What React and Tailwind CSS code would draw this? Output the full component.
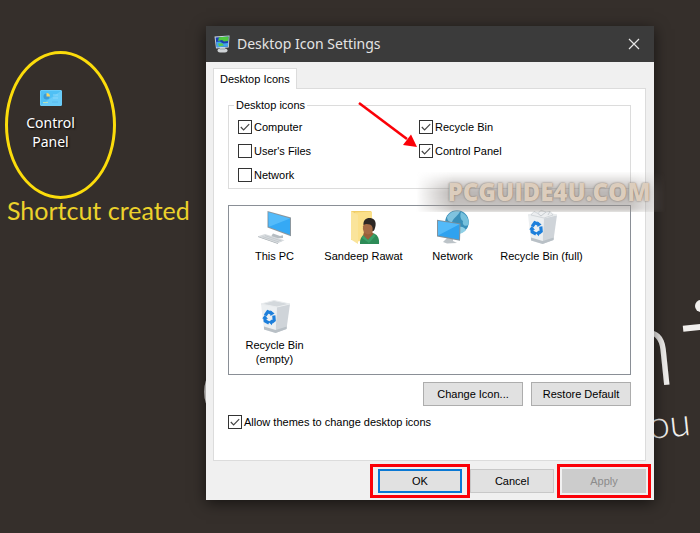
import React from 'react';

const uiFont = "font-['Liberation_Sans',Arial,sans-serif]";
const segoeFont = "font-['Noto_Sans','Open_Sans',sans-serif]";

const ControlPanelIcon = () => (
  <svg className="w-[22px] h-4" viewBox="0 0 22 16">
    <rect x="0.5" y="0.5" width="21" height="15" rx="0.5" fill="#4fc0f5" stroke="#6accf9" />
    <path d="M1 15 L21 15 L21 1 Z" fill="#7ad2fa" opacity="0.6" />
    <circle cx="6.5" cy="6.5" r="3" fill="#3a9bd8" />
    <path d="M6.5 6.5 V3 A3.5 3.5 0 0 1 10 6.5 Z" fill="#f6d56a" />
    <path d="M13 5 h5 M13 8 h5" stroke="#8ad6fb" strokeWidth="1" />
    <path d="M3 12.5 h5" stroke="#b9e0b8" strokeWidth="1" />
    <path d="M12 12 h6" stroke="#5bb8ec" strokeWidth="1" />
  </svg>
);

const TitleIcon = () => (
  <svg className="w-4 h-[18px]" viewBox="0 0 16 18">
    <ellipse cx="8.5" cy="15.4" rx="5" ry="2.2" fill="#cfd3d6" />
    <path d="M6 12 h5 v3 h-5z" fill="#b4babe" />
    <path d="M0.5 1.5 L15.5 0.5 L14.8 12.5 L2 13.5 Z" fill="#c9d4de" />
    <path d="M1.6 2.4 L14.6 1.5 L14 11.4 L2.8 12.3 Z" fill="#1b3fb4" />
    <path d="M5 2.2 L14.6 1.5 L14.2 6 L10 6.5 L8 5 L4 6 Z" fill="#4fc740" />
    <path d="M2.2 7 L6 6.6 L9 8.5 L14.1 8 L14 11.4 L2.8 12.3 Z" fill="#43a6e8" />
    <path d="M4 8.6 L8 8.3 L10 10.6 L5 11.2 Z" fill="#58cb4b" />
  </svg>
);

const PcIcon = () => (
  <svg className="w-9 h-9" viewBox="0 0 36 36">
    <path d="M16 24.5 L23 27 L26 26.3 L26 29 L20 29.6 L14 27.6 Z" fill="#b6bdc2" />
    <path d="M10.5 2 L34 8.6 L34 27.2 L10.5 18.6 Z" fill="#8c979e" />
    <path d="M11.4 3.2 L33 9.4 L33 25.7 L11.4 17.8 Z" fill="#35a9f5" />
    <path d="M11.4 3.2 L33 9.4 L12 17.8 Z" fill="#62c3fc" opacity="0.7" />
    <path d="M1 27.2 L8 25 L27.5 31.2 L21 34.2 Z" fill="#d8dcdf" />
    <path d="M1 27.2 L21 34.2 L21 35 L1 28.1 Z" fill="#a5acb1" />
    <path d="M5.5 27.6 L22 33 M8 26.6 L24.5 32" stroke="#b7bec3" strokeWidth="0.6" />
  </svg>
);

const UserFolderIcon = () => (
  <svg className="w-9 h-9" viewBox="0 0 36 36">
    <path d="M5 2 L25 2 L25 29 L5 31 Z" fill="#f0cd67" />
    <path d="M9 3.5 L26 2.5 L26 30 L9 33 Z" fill="#fbe08a" />
    <path d="M5 2 L12 6 L12 35 L5 30.5 Z" fill="#fae49b" />
    <path d="M14 35 C13.500 30 16 26 20 25 L28 24.500 C32 26 33.500 30 33 35 Z" fill="#2d8b57" />
    <path d="M18 23 L25 22 L28 25 L22 31 L17 26.500 Z" fill="#98603a" />
    <path d="M17 26 L22 31 L28 24.500 L29.500 27 L23 34 L16 29 Z" fill="#3ba068" />
    <ellipse cx="22.5" cy="18.5" rx="5.6" ry="6.8" fill="#a56b45" transform="rotate(12 22.5 18.5)" />
    <path d="M17.500 16 C17 11 20.500 8.500 24.500 9 C29.500 9.500 31 14.500 28.500 20.500 C27.800 22 27 22.500 26.500 21.500 C27 19 26.500 16.500 24 15.500 C21.500 14.800 19.500 14.500 17.500 16 Z" fill="#2d2724" />
  </svg>
);

const NetworkIcon = () => (
  <svg className="w-9 h-9" viewBox="0 0 36 36">
    <circle cx="22" cy="13" r="11.8" fill="#398fb9" />
    <path d="M12 8 C15 3 20 1 25 2 C24 6 19 8 17 13 C14 13 12 11 12 8 Z" fill="#7fc3df" />
    <path d="M26 3 C32 6 34.5 11 33.5 16 C30 18 27 16 28 12 C25 10 25 6 26 3 Z" fill="#76c1dd" />
    <path d="M24 18 C27 17 30 19 31 21 C28 24 26 25 23 24.6 Z" fill="#8fd0e6" />
    <path d="M12 29 L18 30 L18 32 L22 34 L12 34.5 L8 33 Z" fill="#bcc3c8" />
    <path d="M2 10.8 L25.5 14.5 L25 31.8 L2 27.4 Z" fill="#83929c" />
    <path d="M3 12 L24.5 15.3 L24 30.4 L3 26.4 Z" fill="#2fa2ef" />
    <path d="M3 12 L24.5 15.3 L3 26.4 Z" fill="#60c2fc" opacity="0.75" />
  </svg>
);

const BinIcon = ({ full }) => (
  <svg className="w-9 h-9" viewBox="0 0 36 36">
    <path d="M4 6 L20 9 L18.500 35 L7 31.500 Z" fill="#eceff1" />
    <path d="M20 9 L33 6 L29.500 31 L18.500 35 Z" fill="#cfd4d9" />
    <path d="M4 6 L17 2.5 L33 6 L20 9 Z" fill={full ? '#e6e9eb' : '#d3d8dc'} stroke="#e9ecee" strokeWidth="1" />
    {full && (
      <>
        <path d="M7 6 L10 2.5 L14 4.5 L17 1.2 L22 3 L26 2.4 L29 6 L20 9 Z" fill="#eceef0" stroke="#c9ced3" strokeWidth="0.7" />
        <path d="M14 4.5 L17 7 L22 3 M24 6 L26 2.4" stroke="#bcc3c8" strokeWidth="0.8" fill="none" />
      </>
    )}
    <path d="M7 28.500 L18.700 32 L29.800 28.500 L29.500 31 L18.500 35 L7 31.500 Z" fill="#b9c0c6" />
    <g fill="none" stroke="#1d7fdb" strokeWidth="3.2">
      <path d="M8.2 17.500 L10.800 13.800 L14.5 15.2" />
      <path d="M16.8 17.5 L17.2 22.3 L14.5 24.5" />
      <path d="M12 25 L8.2 23 L7.8 19.6" />
    </g>
    <path d="M13.4 12.2 L17.6 15.4 L13.4 18 Z M15 21.4 L15 27.200 L11.4 24 Z M5.2 20.6 L7.800 17 L11 21 Z" fill="#1d7fdb" />
  </svg>
);

const CheckBox = ({ id, label, checked }) => (
  <div className="flex items-center gap-[2px] h-6">
    <span className="grid place-items-center">
      <input
        id={id}
        type="checkbox"
        defaultChecked={checked}
        className="peer col-start-1 row-start-1 appearance-none w-[14px] h-[14px] border border-[#333333] bg-white"
      />
      <svg
        className="col-start-1 row-start-1 w-[10px] h-[10px] pointer-events-none invisible peer-checked:visible"
        viewBox="0 0 10 10"
        fill="none"
        stroke="#444444"
        strokeWidth="1.2"
      >
        <path d="M0.8 5 L3.6 7.8 L9.2 2.2" />
      </svg>
    </span>
    <label htmlFor={id}>{label}</label>
  </div>
);

const desktopIcons = [
  { label: 'This PC', icon: <PcIcon /> },
  { label: 'Sandeep Rawat', icon: <UserFolderIcon /> },
  { label: 'Network', icon: <NetworkIcon /> },
  { label: 'Recycle Bin (full)', icon: <BinIcon full /> },
  { label: 'Recycle Bin (empty)', icon: <BinIcon />, wrap: true },
];

const Wallpaper = () => (
  <div className="absolute inset-0 overflow-hidden text-[#f1efed] font-['Lato',sans-serif]" aria-hidden="true">
    <span className="absolute left-[199px] top-[328px] text-[100px] leading-[100px] font-light">c</span>
    <span className="absolute left-[612px] top-[288px] text-[112px] leading-[112px] font-light -rotate-6">n</span>
    <span className="absolute left-[683px] top-[324px] w-8 h-[6px] bg-current -rotate-6" />
    <span className="absolute left-[695px] top-[300px] w-3 h-3 rounded-full bg-current" />
    <span className="absolute left-[648px] top-[398px] text-[38px] leading-[48px] font-light -rotate-6">ou</span>
  </div>
);

const Watermark = () => (
  <div className="absolute left-[210px] right-[-12px] top-[146px] h-10 flex items-center justify-center pointer-events-none">
    <div className="absolute inset-0 bg-linear-to-b from-transparent via-[#8b8480]/60 to-[#9a9490]/50 mask-x-from-85% blur-[2px]" />
    <span className="relative pl-4 font-['Open_Sans',sans-serif] font-extrabold text-[24px] leading-6 text-[#dccdbd] [text-shadow:0_0_2px_#7d6b5c]">
      PCGUIDE4U.COM
    </span>
  </div>
);

const DesktopShortcut = () => (
  <div className="relative w-[206px] shrink-0 pl-[5px] pt-[51px]">
    <div className="w-[111px] h-[148px] border-3 border-[#fbdc0b] rounded-[50%] pt-9 pr-5 flex justify-center items-start">
      <button className={`${segoeFont} flex flex-col items-center gap-[7px] w-16 text-[14px] leading-[19px] text-white [text-shadow:1px_1px_2px_#000]`}>
        <ControlPanelIcon />
        Control Panel
      </button>
    </div>
    <p className="pl-[2px] font-['Lato',sans-serif] text-[25px] leading-[22px] text-[#ecd22b] whitespace-nowrap">
      Shortcut created
    </p>
  </div>
);

const DialogButton = ({ children, className, ...props }) => (
  <button className={`bg-[#e1e1e1] text-center ${className}`} {...props}>
    {children}
  </button>
);

const SettingsDialog = () => (
  <section
    aria-label="Desktop Icon Settings"
    className={`relative flex-1 min-w-[448px] mt-[26px] mr-[46px] self-start bg-[#f0f0f0] text-black text-[11px] leading-[14px] shadow-[0_3px_14px_rgba(0,0,0,0.6)] ${uiFont}`}
  >
    <header className="flex items-center gap-[7px] h-9 pl-2 pr-3 bg-[#3b3b3b]">
      <TitleIcon />
      <h1 className={`flex-1 text-[14px] leading-5 text-[#e4e4e4] ${segoeFont}`}>Desktop Icon Settings</h1>
      <button aria-label="Close" className="p-[2px]">
        <svg className="w-3 h-3" viewBox="0 0 12 12" stroke="#e6e6e6" strokeWidth="1.2">
          <path d="M1 1 L11 11 M11 1 L1 11" />
        </svg>
      </button>
    </header>

    <div className="pl-[7px] pr-2 pt-[6px]">
      <div role="tablist" className="flex">
        <button role="tab" aria-selected="true" className="relative z-10 -mb-px h-[21px] px-[6px] bg-white border border-b-0 border-[#dcdcdc]">
          Desktop Icons
        </button>
      </div>

      <div role="tabpanel" className="bg-white border border-[#dcdcdc] px-[14px] pt-2 pb-[26px]">
        <fieldset className="relative border border-[#dcdcdc] pl-[9px] pb-px">
          <legend className="-ml-1 px-[2px] leading-4">Desktop icons</legend>
          <div className="grid grid-cols-[181px_1fr] pt-[2px]">
            <CheckBox id="computer" label="Computer" checked />
            <CheckBox id="recycle" label="Recycle Bin" checked />
            <CheckBox id="files" label="User's Files" />
            <CheckBox id="control" label="Control Panel" checked />
            <CheckBox id="network" label="Network" />
          </div>
          <svg className="absolute left-[128px] -top-3 w-[62px] h-[48px] pointer-events-none" viewBox="0 0 62 48">
            <path d="M2 2 L50 38" stroke="#fb0007" strokeWidth="2.6" />
            <path d="M60 46 L46 44 L54 33.500 Z" fill="#fb0007" />
          </svg>
        </fieldset>

        <ul className="mt-4 min-h-[170px] border border-[#8a8f96] pt-[3px] pl-px grid grid-cols-[repeat(auto-fill,89px)] grid-rows-[89px] content-start">
          {desktopIcons.map(({ label, icon, wrap }) => (
            <li key={label} className="flex flex-col items-center gap-1 text-center">
              {icon}
              <span className={wrap ? 'w-16' : 'whitespace-nowrap'}>{label}</span>
            </li>
          ))}
        </ul>

        <div className="flex justify-end gap-2 mt-[7px]">
          <DialogButton className="w-[100px] h-6 border border-[#adadad]">Change Icon...</DialogButton>
          <DialogButton className="w-[100px] h-6 border border-[#adadad]">Restore Default</DialogButton>
        </div>

        <div className="mt-1">
          <CheckBox id="themes" label="Allow themes to change desktop icons" checked />
        </div>
      </div>
    </div>

    <footer className="flex justify-end gap-2 pt-2 pb-[7px] pr-2">
      <div className="relative">
        <DialogButton className="w-[84px] h-6 border-2 border-[#0a78d4]">OK</DialogButton>
        <span className="absolute -inset-x-2 -inset-y-[5px] border-3 border-[#fb0007] pointer-events-none" />
      </div>
      <DialogButton className="w-[84px] h-6 border border-[#c8c8c8]">Cancel</DialogButton>
      <div className="relative">
        <button disabled className="w-[84px] h-6 bg-[#cccccc] text-[#8b8b8b]">Apply</button>
        <span className="absolute -inset-x-[5px] -inset-y-[5px] border-3 border-[#fb0007] pointer-events-none" />
      </div>
    </footer>

    <Watermark />
  </section>
);

export default function App() {
  return (
    <main className="relative flex min-h-screen bg-[#352f2b] overflow-hidden">
      <Wallpaper />
      <DesktopShortcut />
      <SettingsDialog />
    </main>
  );
}
